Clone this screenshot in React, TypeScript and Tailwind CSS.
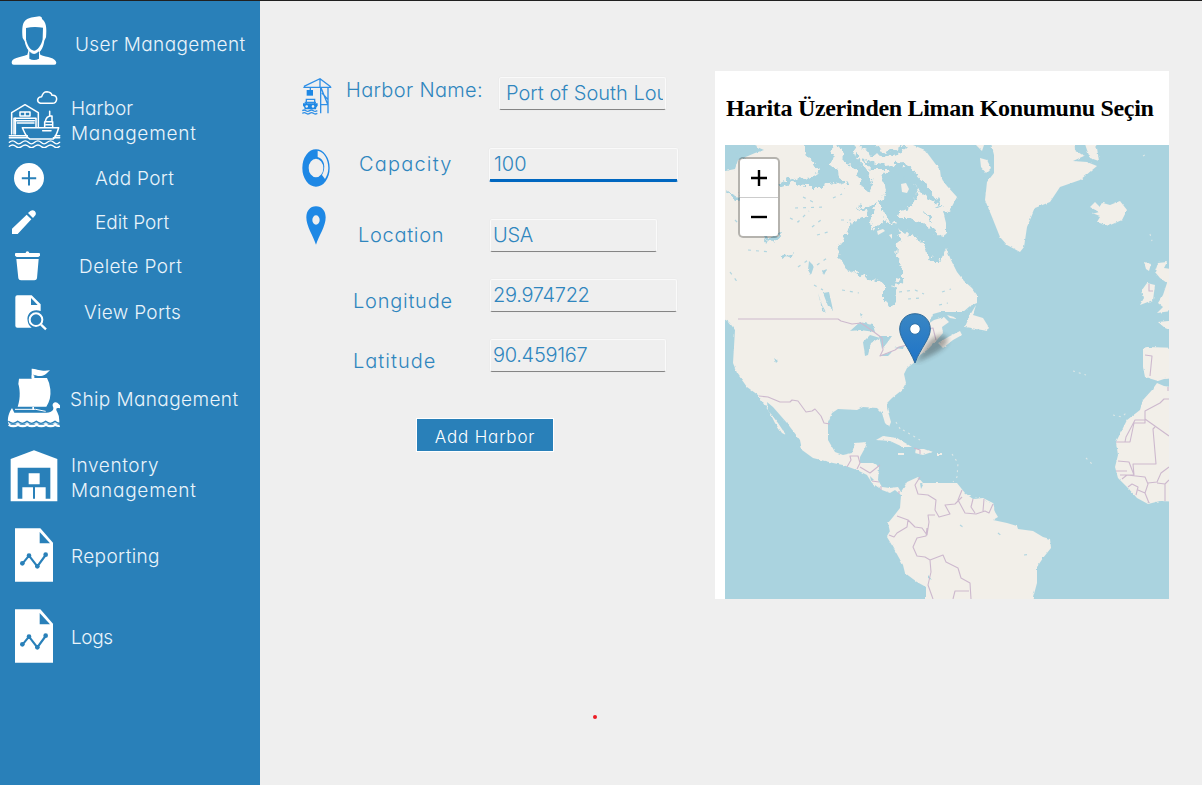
import React from "react";

const menuText = "font-light text-[19px] leading-[25px] text-[#eaf4fb]";

function UserIcon() {
  return (
    <svg width="46" height="50" viewBox="0 0 138 150" fill="none">
      <path d="M35 66C31 22 38 8 66 4l19-3c8 1 8 6 8 8 12 8 15 26 12 55l-5 10c-3 24-15 40-29 40S45 98 41 76Z" fill="#fff" />
      <path d="M45 36c16-4 34-4 51-1l-1 34c-4 20-16 35-26 35S49 90 45 70Z" fill="#2980b9" />
      <path d="M53 101 49 116c-24 8-47 9-47 24q0 6 6 6h122q6 0 6-6c-2-16-28-16-48-24l-4-15-15 14Z" fill="#fff" />
      <path d="m55 106 14 8 15-8v22q-15 8-29 0Z" fill="#2980b9" />
      <path d="m55 104 7 7h14l7-7" stroke="#fff" strokeWidth="3" />
    </svg>
  );
}

function HarborIcon() {
  return (
    <svg width="54" height="58" viewBox="0 0 162 174" fill="none" stroke="#fff" strokeWidth="4.6" strokeLinejoin="round" strokeLinecap="round">
      <path d="M97 40q-9-3-8-11 2-9 12-9 4-15 16-15 13 1 15 11 14-1 14 11-1 13-13 13Z" />
      <path d="M11 132V68l40-24 40 24v44M18 132V85h66v27M22 92h57" />
      <path d="M36 66h30v12H36ZM51 66v12M22 85v47M28 99h50" />
      <path d="M43 113h109c-3 10-6 23-16 34H65C53 140 49 126 43 113ZM110 112V95h24v17M112 94q3-18 20-16v16M125 77V64M114 104h18M104 122h25" />
      <path d="M4 137h54M4 143h54M142 137h13M136 143h19" />
      <path d="M4 157q10-9 19 0t19 0 19 0 19 0 19 0 19 0 19 0 18 0M4 169q10-8 19 0t19 0 19 0 19 0 19 0 19 0 19 0 18 0" strokeWidth="4" />
    </svg>
  );
}

function AddIcon() {
  return (
    <svg width="30" height="30" viewBox="0 0 30 30">
      <circle cx="15" cy="15" r="15" fill="#fff" />
      <path d="M7.8 15.2h14.4M15 8v14.5" stroke="#2980b9" strokeWidth="2" />
    </svg>
  );
}

function EditIcon() {
  return (
    <svg width="24" height="25" viewBox="0 0 72 75" fill="#fff">
      <path d="M0 56 44 14l14 14L17 72H0ZM48 9l7-6q7-5 13 0 6 6 2 13l-7 8Z" />
    </svg>
  );
}

function DeleteIcon() {
  return (
    <svg width="25" height="30" viewBox="0 0 75 90" fill="#fff">
      <path d="M0 8q0-2 3-2h29q0-5 5-5t6 5h29q3 0 3 3v5l-5 4H5l-5-4ZM4 24h67l-5 58q-1 6-8 6H18q-7 0-8-6Z" />
    </svg>
  );
}

function ViewIcon() {
  return (
    <svg width="33" height="36" viewBox="0 0 99 108">
      <path d="M7 1h43l27 27v20c-23-9-44 7-39 30 1 8 5 15 12 20H7q-6 0-6-6V7q0-6 6-6Z" fill="#fff" />
      <path d="M48 9v21h20Z" fill="#2980b9" />
      <circle cx="63" cy="74" r="19" fill="none" stroke="#fff" strokeWidth="6" />
      <path d="m78 89 15 14" stroke="#fff" strokeWidth="7" />
    </svg>
  );
}

function ShipIcon() {
  return (
    <svg width="54" height="60" viewBox="0 0 162 180">
      <path d="M76 2c20 2 26 9 53 5-10 8-14 16-27 17-11 1-16-4-24-4v10h42q8 14 10 34c2 20-2 38-12 52H32C42 88 38 60 34 48l2-16h38V2Z" fill="#fff" />
      <path d="M74 22h8v9h-8ZM76 117h5v8h-5Z" fill="#fff" />
      <path d="M15 120 22 134H119c17-1 24-10 18-20-2-10 8-14 14-10l8 8v9c-12-4-14 2-8 12q6 10 6 26v8H4C0 150 6 134 15 120Z" fill="#fff" />
      <path d="M24 124h62l30 6" stroke="#fff" strokeWidth="3" fill="none" />
      <path d="M4 160q14 12 28 0 14 12 28 0 14 12 28 0 14 12 28 0 14 12 28 0 9 8 16 5" fill="none" stroke="#2980b9" strokeWidth="4" />
      <path d="M5 170q14 8 28 0 14 8 28 0 14 8 28 0 14 8 28 0 14 8 28 0 8 5 13 3" fill="none" stroke="#fff" strokeWidth="7" />
    </svg>
  );
}

function InventoryIcon() {
  return (
    <svg width="48" height="52" viewBox="0 0 144 156">
      <path d="M2 154V27L72 1l70 26v127Z" fill="#fff" />
      <path d="M23 53h98v93H23Z" fill="#2980b9" />
      <path d="M56 70h33v33H56ZM37 112h32v35H37ZM75 112h32v35H75Z" fill="#fff" />
    </svg>
  );
}

function ReportIcon() {
  return (
    <svg width="39" height="54" viewBox="0 0 117 162">
      <path d="M0 1h76l38 43v117H0Z" fill="#fff" />
      <path d="M74 12v34h31Z" fill="#2980b9" />
      <path d="m23 106 19-23 25 32 25-34" fill="none" stroke="#2980b9" strokeWidth="6.5" />
      <g fill="#2980b9">
        <circle cx="22" cy="106" r="7" />
        <circle cx="42" cy="83" r="7" />
        <circle cx="67" cy="115" r="7" />
        <circle cx="92" cy="80" r="7" />
      </g>
    </svg>
  );
}

function CraneIcon() {
  return (
    <svg width="30" height="38" viewBox="0 0 90 114" fill="none" stroke="#2f8fe6" strokeWidth="4">
      <path d="M4 31h84M6 28 54 5l32 24M54 5v26M25 30v12M56 31v78M78 31v78M56 83h22M57 32l20 50M60 48l18 20" />
      <path d="M14 39h19v17H14Z" fill="#1e88e5" stroke="none" />
      <path d="M13 85V67h25v18M8 76h34" />
      <path fillRule="evenodd" d="M3 79h44v7q-5 3-5 11H8q0-8-5-11ZM14 84a4 4 0 1 0 .1 0M33 84a4 4 0 1 0 .1 0" fill="#1e88e5" stroke="none" />
      <path d="M1 101q6-4 11 0t11 0 11 0 12 0M1 109q6-4 11 0t11 0 11 0 12 0" />
    </svg>
  );
}

function CapacityIcon() {
  return (
    <svg width="28" height="38" viewBox="0 0 84 114">
      <path fillRule="evenodd" d="M42 1a41 56 0 1 0 0 112A41 56 0 1 0 42 1ZM42 29a22 28 0 1 1 0 56A22 28 0 1 1 42 29Z" fill="#1e88e5" />
      <path d="M47 5c20 4 32 27 32 52 0 13-4 24-10 33L60 78c13-22 7-49-13-54Z" fill="#efefef" />
    </svg>
  );
}

function PinIcon() {
  return (
    <svg width="20" height="39" viewBox="0 0 60 117">
      <path fillRule="evenodd" d="M30 1C12 1 1 15 1 34c0 27 20 55 29 82 9-27 29-55 29-82C59 15 48 1 30 1Zm0 27a11 14 0 1 1 0 28 11 14 0 1 1 0-28Z" fill="#1e88e5" />
    </svg>
  );
}

function Marker() {
  return (
    <svg className="absolute left-[174px] top-[168px]" width="60" height="52" viewBox="0 0 60 52">
      <defs>
        <linearGradient id="pinFill" x1="0" y1="0" x2="0" y2="1">
          <stop offset="0" stopColor="#3986c3" />
          <stop offset="1" stopColor="#1f74c8" />
        </linearGradient>
        <filter id="soft" x="-20%" y="-20%" width="140%" height="140%"><feGaussianBlur stdDeviation="2.6" /></filter>
      </defs>
      <path d="M16 50C23 42 26 30 34 25c9-5 16-3 14 4-3 9-19 15-32 21Z" fill="#222" opacity=".36" filter="url(#soft)" />
      <path d="M16 .7C7 .7.7 7.5.7 16c0 10 9 18 15.3 34C22 34 31.3 26 31.3 16 31.3 7.5 25 .7 16 .7Z" fill="url(#pinFill)" stroke="#2d6999" strokeWidth="1" />
      <circle cx="16" cy="16" r="5.3" fill="#fff" stroke="#2b70a9" />
    </svg>
  );
}

function WorldMap() {
  return (
    <svg className="block" width="444" height="454" viewBox="725 145 444 454">
      <defs>
        <filter id="coast" x="-5%" y="-5%" width="110%" height="110%">
          <feTurbulence type="fractalNoise" baseFrequency=".22" numOctaves="2" seed="4" />
          <feDisplacementMap in="SourceGraphic" scale="2.6" xChannelSelector="R" yChannelSelector="G" />
        </filter>
        <filter id="arctic" x="-5%" y="-5%" width="110%" height="110%">
          <feTurbulence type="fractalNoise" baseFrequency=".16" numOctaves="3" seed="9" />
          <feDisplacementMap in="SourceGraphic" scale="11" xChannelSelector="R" yChannelSelector="G" />
        </filter>
      </defs>
      <rect x="725" y="145" width="444" height="454" fill="#aad3df" />
      <g fill="#f2efe9" filter="url(#coast)">
        <path d="M715 173 735 169 738 160 748 156 755 153 764 150 757 147 751 135 908 135 913 145 925 150 931 158 940 170 941 178 947 186 957 197 949 212 943 211 946 223 946 234 938 240 940 262 946 248 951 260 957 272 964 281 972 288 977 295 977 303 970 306 963 312 940 312 933 314 928 324 934 320 944 317 949 322 942 327 943 333 937 340 927 350 920 355 915 362 907 368 904 374 906 383 902 390 892 398 887 403 887 408 891 422 889 427 885 423 882 413 877 408 863 407 857 410 838 409 832 413 828 422 828 440 835 452 843 455 852 453 855 443 867 442 865 448 860 457 860 463 873 463 879 467 878 480 882 487 890 488 898 487 901 492 907 482 918 477 923 483 943 483 957 483 965 493 973 499 983 498 993 503 995 512 998 517 993 520 1007 523 1017 526 1018 529 1033 531 1043 537 1050 539 1051 548 1043 558 1037 567 1037 583 1030 609 926 609 926 587 917 582 905 573 903 565 893 547 887 537 890 532 888 523 893 517 900 508 901 495 895 490 890 493 882 490 872 483 867 475 857 470 843 465 833 463 813 458 802 450 800 440 787 423 773 407 767 402 768 410 778 423 786 435 782 433 775 423 770 413 763 403 758 395 747 387 737 373 733 363 735 330 729 322 715 314Z" />
        <path d="M989 135 994 155 994 173 987 182 985 200 992 217 1000 237 1007 245 1020 252 1024 247 1027 227 1035 208 1050 202 1060 187 1080 180 1097 166 1087 162 1073 161 1084 156 1075 150 1074 135ZM1082 135 1087 150 1090 158 1099 161 1097 148 1093 135ZM980 158 987 160 991 168 986 173 981 167ZM976 145 984 145 982 151Z" />
        <path d="M1090 207 1095 202 1100 207 1103 203 1110 205 1120 201 1127 210 1122 220 1108 226 1097 222 1100 217 1092 214 1099 212Z" />
        <path d="M1158 263 1167 262 1164 268 1179 270V310L1157 313 1163 307 1158 303 1163 295 1167 283 1160 278 1155 272ZM1147 283 1155 285 1153 300 1140 305 1144 298 1142 290ZM1158 322 1179 320V334L1165 328ZM1143 348 1147 347 1179 348V378L1164 379 1158 381 1145 377 1143 367Z" />
        <path d="M1179 388 1164 386 1157 383 1152 390 1143 400 1140 410 1127 420 1117 440 1116 442 1118 455 1115 467 1118 478 1128 488 1137 498 1148 504 1160 501 1179 502Z" />
        <path d="M976 305 973 315 983 318 988 326 987 331 982 330 965 327 970 315ZM938 343 943 340 950 336 960 331 962 335 953 340 943 348ZM947 315 954 317 956 319 950 318Z" />
        <path d="M876 440 883 436 897 438 912 447 903 447 890 441ZM916 449 924 449 932 452 923 455 915 453ZM898 453H904V455H898ZM937 453H942V455H937ZM1144 262 1151 264 1149 271 1146 269Z" />
      </g>
      <g fill="#aad3df" filter="url(#arctic)">
        <path d="M853 222 867 215 870 205 877 203 870 223 875 230 883 220 897 225 900 233 898 243 897 260 903 270 903 278 893 285 897 300 890 307 883 298 883 283 870 279 847 270 839 258 840 245 847 230Z" />
        <path d="M880 203 885 193 883 175 893 167 903 170 913 180 918 193 912 207 900 210 898 218 910 218 923 223 943 237 946 243 940 262 934 262 928 255 927 247 917 237 903 232 893 223 885 215Z" />
        <path d="M803 140H829L834 155 831 164 838 170 839 179 847 182 843 186 834 182 820 187 803 187 795 181 779 187 780 182 797 177 810 179 820 172 813 160 806 157Z" />
        <path d="M836 140H852L857 157 867 171 874 180 869 192 862 186 857 172 847 164Z" />
        <path d="M854 140 874 140 879 149 888 152 906 145 904 151 890 157 873 155 863 150ZM862 160 885 165 903 163 918 175 932 192 943 208 929 200 912 183 891 170 871 170Z" />
        <path d="M727 192 744 197 754 200 735 201ZM763 241 775 234 783 233 775 242ZM780 256 795 253 783 260ZM857 205 870 208 877 203 870 215ZM922 211 931 215 933 222ZM737 155 747 143 743 158Z" />
      </g>
      <path d="M901 184 906 183 909 189 907 193 902 192ZM877 231 883 229 885 231 878 235ZM889 235 892 234 892 239Z" fill="#f2efe9" />
      <g fill="#aad3df" filter="url(#coast)">
        <path d="M850 331 860 322 873 325 875 332 860 330ZM865 356 863 342 870 335 880 338 871 343 868 355ZM879 336 892 336 887 343 882 349ZM879 356 893 351 888 356ZM894 348 904 346 903 349ZM823 293 829 292 833 310 828 306ZM818 293 822 305 826 312 822 309ZM809 261 814 266 811 275 808 270ZM822 271 827 269 824 275ZM774 358 778 361 776 363ZM860 313 863 315 861 318ZM920 483 923 485 921 489ZM870 476 874 480 871 481ZM928 575 932 580 928 578Z" />
      </g>
      <g stroke="#aad3df" strokeWidth="1.2" fill="none" strokeDasharray="3 5" opacity=".9">
        <path d="M735 220 745 230 752 228M790 218 798 222 809 211M812 227 821 220M817 235 832 231M748 250 770 252M798 267 811 258M817 265 827 258M814 285 823 290M842 290 859 293M730 272 738 283M899 292 915 290 924 294M908 299 921 298M942 292 951 289M939 305 948 303M795 208 827 207M803 197 817 204M759 180 772 188M833 198 842 194M841 220 851 220M1024 555 1031 554M960 525 966 529M998 533 1003 537" />
      </g>
      <g fill="none" stroke="#f2efe9" strokeWidth="1.1" strokeDasharray="2 4" opacity=".7">
        <path d="M896 422 902 432M903 430 920 440M952 454 958 463 957 477 953 482M1113 415 1122 417 1128 411M1086 458 1094 466M1143 156 1147 154M1150 234 1152 241M1073 371 1086 375" />
      </g>
      <g stroke="#cdb9ce" strokeWidth="1.1" fill="none" strokeLinejoin="round">
        <path d="M738 319H838L841 321 852 324 861 323 874 332 882 338 883 350 880 356 895 350 899 347 907 345 920 338 927 329 933 328 936 340M759 396 768 397 780 402 790 402 792 400 798 401 806 412 812 411 815 409 821 416 824 423 830 424" />
        <path d="M847 467 851 460 850 456 858 456 860 463 857 469M860 467 870 473 880 465M872 481 879 482M881 486 881 490M899 491V494" />
        <path d="M920 477 915 485 918 494 928 495 936 500 935 510 939 517 950 514 945 505 955 504 962 497M935 515 928 515 929 522 927 535 922 528 915 527 908 520 897 516M908 520 907 527 897 533 894 537 889 535M927 528 926 536 917 538 913 547 917 556 925 557 930 560 943 555 946 562 958 568 961 578 970 583 971 599M930 560 931 572 928 585 933 599M953 599 955 591 969 591" />
        <path d="M962 490 958 500 965 513 976 514 985 511 989 513 993 504M973 499 971 507 975 513M984 499 983 511" />
        <path d="M1116 442H1130L1134 423 1145 423 1145 420 1135 420 1126 437 1125 442M1145 423V411L1160 403 1164 399 1169 399M1145 419 1169 436M1155 427 1153 429 1156 464 1133 464 1134 475M1118 461 1129 462 1134 475 1120 475M1116 471H1127M1122 479 1127 475 1145 477 1148 484 1145 493 1149 503M1128 487 1132 484 1138 487 1136 495M1138 490 1145 493M1148 483 1157 482 1161 473 1169 467M1157 483 1165 484 1165 501M1165 484 1169 480M1168 387V391M1145 355 1152 356 1150 376M1149 284V291L1153 291M914 448 920 450 920 454" />
      </g>
    </svg>
  );
}

type FieldProps = { value: string; box: string; focused?: boolean; text?: string };

function Field({ value, box, focused, text = "pl-[2px] tracking-[-0.3px]" }: FieldProps) {
  return (
    <div
      className={`flex shrink-0 items-center overflow-hidden rounded-[2px] border border-[#fafafa] shadow-[0_0_1px_#d0d0d0] ${box} ${
        focused ? "border-b-[3px] border-b-[#0067c0]" : "border-b-[#858585]"
      }`}
    >
      <input
        defaultValue={value}
        className={`h-[28px] w-full min-w-0 bg-transparent text-[20px] font-light leading-[28px] text-[#2f86be] outline-none ${
          focused ? "" : "-mt-[2px]"
        } ${text}`}
      />
    </div>
  );
}

const label = "shrink-0 whitespace-nowrap text-[20px] font-light leading-[24px] text-[#2f86be]";

export default function App() {
  return (
    <div
      className="flex h-[785px] w-[1202px] overflow-hidden border-t border-[#202020] bg-[#efefef]"
      style={{ fontFamily: 'Inter, Lato, sans-serif', fontFeatureSettings: '"cv11" 1, "ss03" 1' }}
    >
      <nav className="flex w-[260px] shrink-0 flex-col bg-[#2980b9]">
        <div className="flex h-[87px] items-center pl-[11px]">
          <div className="mb-[7px] w-[64px]"><UserIcon /></div>
          <span className={`${menuText} whitespace-nowrap tracking-[0.37px]`}>User Management</span>
        </div>
        <div className="flex h-[65px] items-center pl-[8px]">
          <div className="mb-[3px] w-[63px]"><HarborIcon /></div>
          <span className={`${menuText} flex flex-col`}>
            <span>Harbor</span>
            <span className="tracking-[0.75px]">Management</span>
          </span>
        </div>
        <div className="flex h-[50px] items-center pl-[14px]">
          <div className="w-[81px]"><AddIcon /></div>
          <span className={`${menuText} tracking-[0.3px]`}>Add Port</span>
        </div>
        <div className="flex h-[38px] items-center pl-[12px]">
          <div className="w-[83px]"><EditIcon /></div>
          <span className={menuText}>Edit Port</span>
        </div>
        <div className="flex h-[50px] items-center pl-[15px]">
          <div className="w-[64px]"><DeleteIcon /></div>
          <span className={`${menuText} tracking-[0.5px]`}>Delete Port</span>
        </div>
        <div className="flex h-[44px] items-center pl-[15px]">
          <div className="w-[69px]"><ViewIcon /></div>
          <span className={`${menuText} mb-[2px] tracking-[0.3px]`}>View Ports</span>
        </div>
        <div className="mt-[32px] flex h-[64px] items-center pl-[7px]">
          <div className="mb-[2px] w-[63px]"><ShipIcon /></div>
          <span className={`${menuText} whitespace-nowrap tracking-[0.4px]`}>Ship Management</span>
        </div>
        <div className="mt-[17px] flex h-[56px] items-center pl-[10px]">
          <div className="w-[61px]"><InventoryIcon /></div>
          <span className={`${menuText} mt-[3px] flex flex-col`}>
            <span className="tracking-[0.6px]">Inventory</span>
            <span className="tracking-[0.75px]">Management</span>
          </span>
        </div>
        <div className="mt-[22px] flex h-[58px] items-center pl-[15px]">
          <div className="w-[56px]"><ReportIcon /></div>
          <span className={`${menuText} mt-[2px] tracking-[0.4px]`}>Reporting</span>
        </div>
        <div className="mt-[24px] flex h-[56px] items-center pl-[15px]">
          <div className="w-[56px]"><ReportIcon /></div>
          <span className={`${menuText} mt-[2px] tracking-[-0.4px]`}>Logs</span>
        </div>
      </nav>

      <main className="flex flex-1 items-start">
        <form className="flex w-[455px] shrink-0 flex-col pt-[76px]">
          <div className="flex h-[71px] items-start pl-[42px]">
            <div className="w-[44px] shrink-0"><CraneIcon /></div>
            <div className="w-[153px] shrink-0 pt-[1px]"><span className={`${label} tracking-[0.35px]`}>Harbor Name:</span></div>
            <Field value="Port of South Louisiana" box="h-[33px] w-[167px] pr-[2px]" text="ml-[6px]" />
          </div>
          <div className="flex h-[71px] items-start pl-[42px]">
            <div className="w-[57px] shrink-0 pt-[1px]"><CapacityIcon /></div>
            <div className="w-[130px] shrink-0 pt-[4px]"><span className={`${label} tracking-[1.2px]`}>Capacity</span></div>
            <Field value="100" box="h-[34px] w-[189px]" focused text="pl-[4px]" />
          </div>
          <div className="flex h-[60px] items-start pl-[46px]">
            <div className="-mt-[13px] w-[52px] shrink-0"><PinIcon /></div>
            <div className="w-[132px] shrink-0 pt-[4px]"><span className={`${label} tracking-[0.7px]`}>Location</span></div>
            <Field value="USA" box="h-[33px] w-[167px]" />
          </div>
          <div className="flex h-[60px] items-start pl-[93px]">
            <div className="w-[137px] shrink-0 pt-[10px]"><span className={`${label} tracking-[0.75px]`}>Longitude</span></div>
            <Field value="29.974722" box="h-[33px] w-[187px]" />
          </div>
          <div className="flex h-[79px] items-start pl-[93px]">
            <div className="w-[137px] shrink-0 pt-[10px]"><span className={`${label} tracking-[1px]`}>Latitude</span></div>
            <Field value="90.459167" box="h-[33px] w-[176px]" />
          </div>
          <button type="button" className="ml-[156px] h-[34px] w-[138px] border border-white bg-[#2980b9] pt-[4px] text-[17px] font-light leading-[26px] tracking-[0.85px] text-white">
            Add Harbor
          </button>
          <div className="ml-[333px] mt-[263px] size-[4px] rounded-full bg-[#ed1c24]" />
        </form>

        <section className="mt-[70px] h-[528px] w-[454px] bg-white pl-[10px]">
          <h2 className="flex h-[74px] items-center whitespace-nowrap pl-[1px] font-[Liberation_Serif,serif] text-[24px] font-bold tracking-[-0.3px] text-black">
            Harita Üzerinden Liman Konumunu Seçin
          </h2>
          <div className="relative h-[454px] w-[444px]">
            <WorldMap />
            <div className="absolute left-[13px] top-[12px] flex w-[42px] flex-col rounded-[5px] border-2 border-black/25 bg-white bg-clip-padding">
              <span className="flex h-[39px] items-center justify-center border-b border-[#ccc]">
                <svg width="16" height="16" viewBox="0 0 16 16"><path d="M0 8h16M8 0v16" stroke="#000" strokeWidth="2.4" /></svg>
              </span>
              <span className="flex h-[38px] items-center justify-center">
                <svg width="16" height="16" viewBox="0 0 16 16"><path d="M0 8h16" stroke="#000" strokeWidth="2.4" /></svg>
              </span>
            </div>
            <Marker />
          </div>
        </section>
      </main>
    </div>
  );
}
